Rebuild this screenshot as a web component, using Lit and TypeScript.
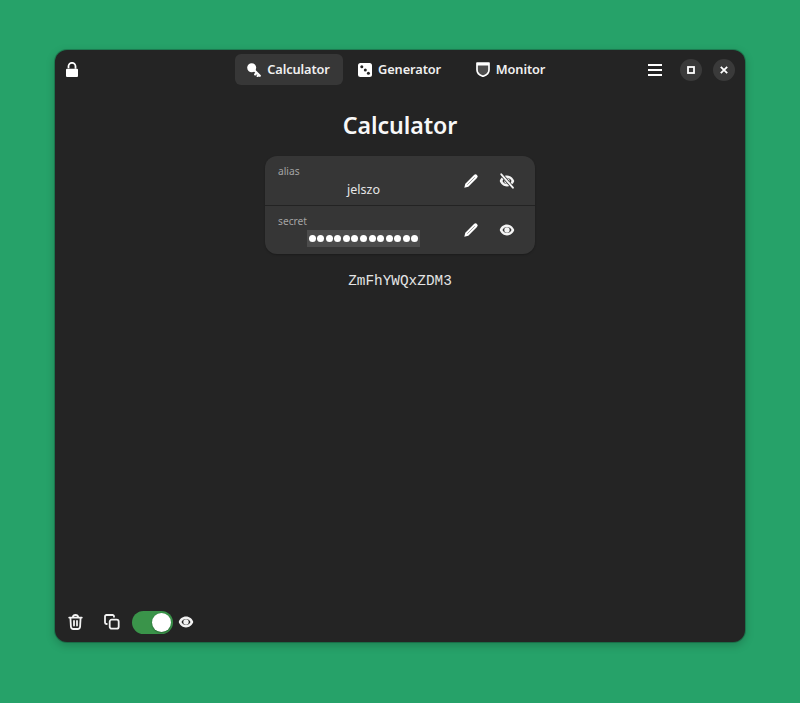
import { LitElement, html, css, svg } from "lit";
import { customElement } from "lit/decorators.js";

const pencil = svg`<path d="M1.300 14.700l1-4 8.700-8.700a2 2 0 0 1 3 3l-8.700 8.700z" fill="#fff"/><path d="M4.500 11.500l7-7" stroke="#8a8a8a" stroke-width=".8" stroke-linecap="round"/>`;
const eyeShape = svg`<path fill-rule="evenodd" d="M8 2.600C4.400 2.600 1.700 5 .7 8c1 3 3.700 5.400 7.300 5.400s6.300-2.400 7.300-5.400c-1-3-3.700-5.400-7.300-5.400zm0 2.400c2 0 3.700 1.200 4.500 3-.8 1.800-2.500 3-4.500 3s-3.700-1.200-4.500-3c.8-1.800 2.500-3 4.500-3z" fill="currentColor"/><circle cx="8" cy="8" r="2.700" fill="currentColor"/>`;
const eyeOff = svg`${eyeShape}<path d="M2.300 1.300l11.600 13.400" stroke="#363636" stroke-width="3.400"/><path d="M2.300 1.300l11.600 13.400" stroke="currentColor" stroke-width="1.900" stroke-linecap="round"/>`;

@customElement("app-root")
export class AppRoot extends LitElement {
  static styles = css`
    :host {
      display: block;
      height: 703px;
      box-sizing: border-box;
      padding: 50px 55px 61px;
      background: #26a269;
      font-family: "Noto Sans", "Open Sans", sans-serif;
      color: #fff;
    }
    svg { display: block; flex: none; }
    .window {
      height: 592px;
      background: #242424;
      border-radius: 12px;
      box-shadow: 0 0 0 1px rgba(0,0,0,.2), 0 3px 10px rgba(0,0,0,.22);
      display: flex;
      flex-direction: column;
      overflow: hidden;
    }
    .header {
      display: grid;
      grid-template-columns: 1fr auto 1fr;
      align-items: center;
      height: 39px;
      padding: 0 10px 0 9px;
      flex: none;
    }
    .left { display: flex; margin-top: 1px; }
    .tabs { display: flex; gap: 3px; }
    .tab {
      display: flex;
      align-items: center;
      justify-content: center;
      gap: 6px;
      width: 108px;
      height: 31px;
      border-radius: 6px;
      font-size: 12.800px;
      letter-spacing: -0.100px;
      font-weight: 600;
      color: #f0f0f0;
      box-sizing: border-box;
    }
    .tab span { position: relative; top: -0.5px; }
    .tab.active { background: #373737; }
    .right { display: flex; justify-content: flex-end; align-items: center; gap: 14px; margin-top: 1px; }
    .menu { margin-right: 4px; }
    .wbtn {
      width: 22px; height: 22px; border-radius: 50%;
      background: #3a3a3a;
      display: flex; align-items: center; justify-content: center;
    }
    .wbtn + .wbtn { margin-left: -3px; }
    .main {
      flex: 1;
      display: flex;
      flex-direction: column;
      align-items: center;
    }
    h1 {
      margin: 18px 0 13px;
      font-size: 23.200px;
      letter-spacing: -0.100px;
      line-height: 36px;
      font-weight: 600;
      color: #f8f8f8;
    }
    .list {
      width: 270px;
      background: #363636;
      border-radius: 12px;
      box-shadow: 0 1px 2px rgba(0,0,0,.25);
    }
    .row {
      height: 49px;
      display: flex;
      align-items: stretch;
      padding-left: 13px;
      padding-right: 20px;
      box-sizing: border-box;
    }
    .row + .row { border-top: 1px solid #232323; }
    .field { flex: 1; display: flex; flex-direction: column; }
    .label { font-size: 10.200px; line-height: 14px; color: #a4a4a4; margin-top: 8px; }
    .value {
      font-size: 12.500px;
      line-height: 19px;
      color: #e6e6e6;
      margin: 2px 0 0 29px;
      width: 113px;
      text-align: center;
    }
    .dots {
      align-self: flex-start;
      margin: 2px 0 0 29px;
      height: 17px;
      width: 113px;
      background: #4c4c4c;
      display: flex;
      align-items: center;
      justify-content: center;
      gap: 1.550px;
    }
    .dot { width: 7px; height: 7px; border-radius: 50%; background: #fff; flex: none; }
    .actions { display: flex; align-items: center; gap: 20px; color: #f4f4f4; }
    .output {
      margin-top: 16.500px;
      font-family: "Liberation Mono", monospace;
      font-size: 14.400px;
      line-height: 20px;
      color: #e4e4e4;
    }
    .footer {
      flex: none;
      height: 40px;
      padding-left: 13px;
      display: flex;
      align-items: center;
      color: #f2f2f2;
    }
    .copy { margin-left: 21px; }
    .switch {
      margin-left: 12px;
      width: 41px; height: 23px;
      border-radius: 12px;
      background: #3a944a;
      display: flex;
      align-items: center;
      justify-content: flex-end;
      padding-right: 2px;
      box-sizing: border-box;
    }
    .knob { width: 19px; height: 19px; border-radius: 50%; background: #fff; box-shadow: 0 1px 2px rgba(0,0,0,.3); }
    .feye { margin-left: 5px; }
  `;

  render() {
    return html`
      <div class="window">
        <div class="header">
          <div class="left">
            <svg width="16" height="16" viewBox="0 0 16 16" aria-label="lock">
              <rect x="2" y="6.800" width="12" height="8.200" rx="1" fill="#fff"/>
              <path d="M4.500 6.300V4.300a3.500 3.500 0 0 1 7 0v2.500" fill="none" stroke="#fff" stroke-width="1.800"/>
            </svg>
          </div>
          <div class="tabs">
            <div class="tab active">
              <svg width="14" height="14" viewBox="0 0 14 14"><circle cx="4.700" cy="4.700" r="4.500" fill="#fff"/><path d="M7 7l5.800 5.800M9.800 9.800l-1.600 1.600M11.800 11.800l-1.200 1.200" stroke="#fff" stroke-width="2.200" fill="none" stroke-linecap="round"/></svg>
              <span>Calculator</span>
            </div>
            <div class="tab">
              <svg width="14" height="14" viewBox="0 0 14 14"><rect width="14" height="14" rx="2.500" fill="#fff"/><circle cx="3.800" cy="3.800" r="1.500" fill="#242424"/><circle cx="7.300" cy="7" r="1.500" fill="#242424"/><circle cx="10.400" cy="10.200" r="1.500" fill="#242424"/></svg>
              <span>Generator</span>
            </div>
            <div class="tab">
              <svg width="14" height="15" viewBox="0 0 14 15"><path d="M1 1h12v7c0 3.500-3 5.300-6 6.300C4 13.300 1 11.500 1 8z" fill="#4e4e4e" stroke="#fff" stroke-width="1.700" stroke-linejoin="round"/><path d="M1 1h12v2.500H1z" fill="#fff"/></svg>
              <span>Monitor</span>
            </div>
          </div>
          <div class="right">
            <svg class="menu" width="14" height="12" viewBox="0 0 14 12"><path d="M0 1h14M0 6h14M0 11h14" stroke="#fff" stroke-width="1.800"/></svg>
            <div class="wbtn"><svg width="8" height="8" viewBox="0 0 8 8"><rect x="1" y="1" width="6" height="6" fill="none" stroke="#fff" stroke-width="1.800"/></svg></div>
            <div class="wbtn"><svg width="8" height="8" viewBox="0 0 8 8"><path d="M.8.800l6.400 6.400M7.200.800L.8 7.200" stroke="#fff" stroke-width="1.800"/></svg></div>
          </div>
        </div>
        <div class="main">
          <h1>Calculator</h1>
          <div class="list">
            <div class="row">
              <div class="field">
                <span class="label">alias</span>
                <span class="value">jelszo</span>
              </div>
              <div class="actions">
                <svg width="16" height="16" viewBox="0 0 16 16">${pencil}</svg>
                <svg width="16" height="16" viewBox="0 0 16 16">${eyeOff}</svg>
              </div>
            </div>
            <div class="row">
              <div class="field">
                <span class="label">secret</span>
                <div class="dots">${Array.from({ length: 13 }, () => html`<span class="dot"></span>`)}</div>
              </div>
              <div class="actions">
                <svg width="16" height="16" viewBox="0 0 16 16">${pencil}</svg>
                <svg width="16" height="16" viewBox="0 0 16 16">${eyeShape}</svg>
              </div>
            </div>
          </div>
          <div class="output">ZmFhYWQxZDM3</div>
        </div>
        <div class="footer">
          <svg width="15" height="16" viewBox="0 0 15 16"><path d="M4.800 3.200C5 1.800 6 1 7.500 1s2.500.8 2.700 2.200M1.200 3.600h12.600M2.400 3.600l.5 8.900c.1 1.500 1 2.500 2.500 2.500h4.200c1.500 0 2.400-1 2.500-2.500l.5-8.900M6 7v4.500M9 7v4.500" fill="none" stroke="currentColor" stroke-width="1.800" stroke-linecap="round"/></svg>
          <svg class="copy" width="16" height="16" viewBox="0 0 16 16"><rect x="5.700" y="5.700" width="9" height="9" rx="2" fill="none" stroke="currentColor" stroke-width="1.800"/><path d="M10 2.800V2.500A1.500 1.500 0 0 0 8.500 1h-6A1.500 1.500 0 0 0 1 2.500v6A1.500 1.500 0 0 0 2.500 10h.3" fill="none" stroke="currentColor" stroke-width="1.800" stroke-linecap="round"/></svg>
          <div class="switch"><div class="knob"></div></div>
          <svg class="feye" width="16" height="16" viewBox="0 0 16 16">${eyeShape}</svg>
        </div>
      </div>
    `;
  }
}
